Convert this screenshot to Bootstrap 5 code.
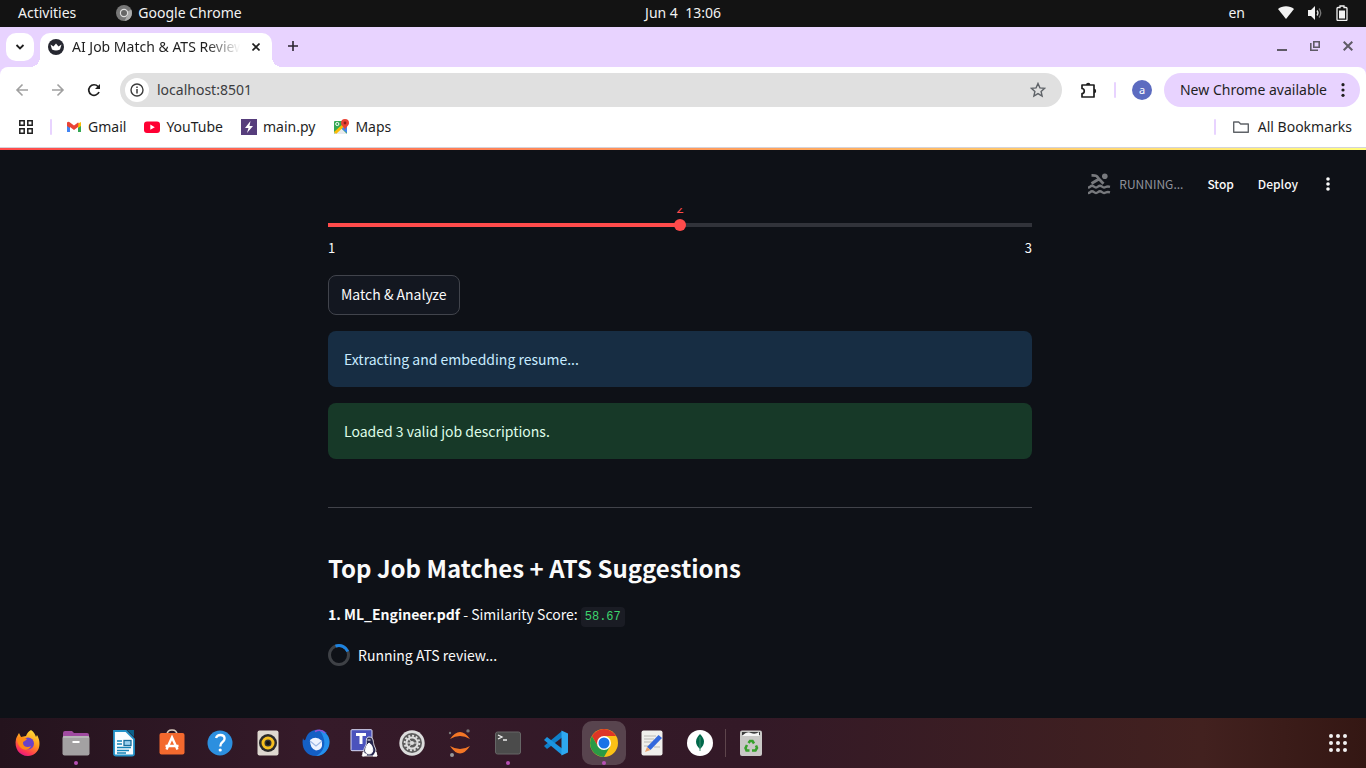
<!DOCTYPE html>
<html lang="en">
<head>
<meta charset="utf-8">
<meta name="viewport" content="width=device-width, initial-scale=1">
<title>AI Job Match &amp; ATS Review</title>
<link href="https://cdn.jsdelivr.net/npm/bootstrap@5.3.0/dist/css/bootstrap.min.css" rel="stylesheet">
<style>
  :root { --ui: "Noto Sans", "Open Sans", sans-serif; --app: "Noto Sans CJK SC", "Noto Sans", sans-serif; --lilac: #e8d3ff; }
  body { font-family: var(--ui); font-size: 14px; line-height: 20px; background: #0e1117; color: #1f1f1f; }
  button { font: inherit; color: inherit; border: 0; background: none; padding: 0; }
  svg { display: block; flex: none; }
  a { color: inherit; text-decoration: none; }

  /* desktop top bar */
  .sysbar { height: 27px; background: #131313; color: #f2f2f2; padding: 0 18px 1px; }
  .sysbar > div { flex: 1 1 0; }
  .app-menu { margin-left: 40px; gap: 6px; }
  .tray { gap: 13px; }
  .tray button { margin-right: 20px; }

  /* browser frame */
  .tabstrip { height: 40px; background: var(--lilac); padding: 6px 13px 0 6px; }
  .tab-search { width: 28px; height: 28px; border-radius: 10px; background: #fff; }
  .browser-tab { position: relative; width: 232px; height: 34px; border-radius: 10px 10px 0 0; background: #fff; padding: 0 8px 6px; margin-left: 6px; }
  .browser-tab::before, .browser-tab::after { content: ""; position: absolute; bottom: 0; width: 10px; height: 10px; }
  .browser-tab::before { right: 100%; background: radial-gradient(circle at 0 0, transparent 10px, #fff 10px); }
  .browser-tab::after { left: 100%; background: radial-gradient(circle at 100% 0, transparent 10px, #fff 10px); }
  .tab-title { width: 168px; overflow: hidden; white-space: nowrap; -webkit-mask-image: linear-gradient(90deg, #000 80%, transparent); mask-image: linear-gradient(90deg, #000 80%, transparent); }
  .window-buttons { gap: 23px; }
  .under-tabs { background: var(--lilac); }
  .toolbar { height: 46px; background: #fff; border-radius: 8px 8px 0 0; padding: 0 6px 0 14px; }
  .nav-buttons { gap: 20px; }
  .omnibox { height: 34px; border-radius: 17px; background: #e0e0e0; padding: 0 16px 0 5px; margin: 0 18px; }
  .omnibox input { border: 0; background: none; outline: 0; padding: 0; color: #3c3d40; }
  .site-info { width: 24px; height: 24px; border-radius: 50%; background: #fff; }
  .divider { width: 2px; height: 16px; background: var(--lilac); border-radius: 1px; }
  .avatar { width: 20px; height: 20px; border-radius: 50%; background: #5c6bc0; color: #fff; font-size: 11px; line-height: 20px; }
  .update-pill { height: 34px; border-radius: 17px; background: var(--lilac); padding: 0 9px 0 16px; margin-left: 12px; }
  .bookmarks { height: 35px; background: #fff; padding: 0 14px 7px 18px; border-bottom: 1px solid #d3d3dc; }
  .bookmark-items { gap: 18px; margin-left: 14px; }
  .bookmark-items a { gap: 6px; }
  .rainbow { height: 2px; background: linear-gradient(90deg, #ff4b4b, #ffa75f 58%, #fffd80); }

  /* web app */
  .app { font-family: var(--app); color: #fafafa; }
  .app-header { height: 58px; padding: 10px 32px 0 0; gap: 24px; font-size: 12px; font-weight: 500; }
  .running { color: #8f919b; font-weight: 400; }
  .app-body { padding-right: 6px; overflow: hidden; }
  .app-column { width: 100%; max-width: 704px; font-size: 14px; line-height: 24px; padding-top: 11px; }
  .slider-wrap { position: relative; }
  .slider { -webkit-appearance: none; appearance: none; display: block; width: 100%; height: 12px; margin: 0; background: linear-gradient(90deg, #ff4b4b 50%, #31333a 50%) center / 100% 4px no-repeat; }
  .slider::-webkit-slider-thumb { -webkit-appearance: none; width: 12px; height: 12px; border-radius: 50%; background: #ff4b4b; }
  .slider-value { position: absolute; left: 0; right: 0; bottom: 13px; text-align: center; color: #ff4b4b; font-size: 13px; line-height: 20px; }
  .slider-ends { font-size: 13px; line-height: 20px; padding: 7px 0 0; }
  .btn-app { height: 40px; padding: 0 12px 2px; border: 1px solid #41444c; border-radius: 8px; background: #131720; color: #fafafa; margin: 17px 0 16px; }
  .note { border: 0; border-radius: 8px; padding: 16px; margin: 0 0 16px; }
  .note-info { background: #172d43; color: #c7ebff; }
  .note-success { background: #173928; color: #dffde9; }
  .rule { margin: 48px 0 46px; border-top: 1px solid #41434a; opacity: 1; }
  .app-column h2 { font-size: 24px; line-height: 28px; font-weight: 700; margin: 0 0 20px; }
  .score { font: 12px/20px "Liberation Mono", monospace; color: #3dd56d; background: #1a1c24; border-radius: 4px; padding: 0 4px; }

  /* dock */
  .dock { height: 50px; padding: 0 4px; background: linear-gradient(90deg, #24131d, #351a29 22%, #331927 55%, #42211f 88%, #341713); }
  .dock button { position: relative; width: 48px; height: 50px; }
  .dock .current { width: 44px; height: 44px; margin: 0 2px; border-radius: 10px; background: #58444e; }
  .dock .open-app::after { content: ""; position: absolute; left: 50%; bottom: 3px; width: 4px; height: 4px; margin-left: -2px; border-radius: 50%; background: #b650b4; }
  .dock .current::after { bottom: 0; }
  .dock-line { width: 1px; height: 28px; background: #5e454c; margin: 0 1px; }
</style>
</head>
<body class="d-flex flex-column vh-100 overflow-hidden">

<header class="sysbar d-flex align-items-center">
  <div class="d-flex align-items-center">
    <button type="button">Activities</button>
    <button type="button" class="app-menu d-flex align-items-center">
      <svg width="16" height="16" viewBox="0 0 16 16"><circle cx="8" cy="8" r="8" fill="#777"/><path d="M8 8 15.300 4.800A8 8 0 0 1 8.500 16L11.500 10z" fill="#aaa"/><circle cx="8" cy="8" r="4.200" fill="#ddd"/><circle cx="8" cy="8" r="3" fill="#666"/></svg>
      Google Chrome
    </button>
  </div>
  <button type="button">Jun 4&nbsp; 13:06</button>
  <div class="tray d-flex align-items-center justify-content-end">
    <button type="button">en</button>
    <svg width="16" height="14" viewBox="0 0 16 14"><path d="M0 3C4-.6 12-.6 16 3L8 13z" fill="#f2f2f2"/></svg>
    <svg width="16" height="16" viewBox="0 0 16 16"><path d="M1 5h3l4-4v14l-4-4H1z" fill="#f2f2f2"/><path d="M10 5.500q2 2.500 0 5" fill="none" stroke="#ddd" stroke-width="1.300"/><path d="M12 3.500q3.500 4.500 0 9" fill="none" stroke="#777" stroke-width="1.300"/></svg>
    <svg width="12" height="16" viewBox="0 0 12 16"><path d="M4 1h4v1.500h2q1 0 1 1v11q0 1-1 1H2q-1 0-1-1v-11q0-1 1-1h2z" fill="none" stroke="#f2f2f2" stroke-width="1.300"/><path d="M3 5.500h6v8H3z" fill="#f2f2f2"/></svg>
  </div>
</header>

<div class="tabstrip d-flex">
  <button type="button" class="tab-search d-flex align-items-center justify-content-center" aria-label="Search tabs"><svg width="10" height="6" viewBox="0 0 10 6"><path d="m1.500 1 3.500 3.500L8.500 1" fill="none" stroke="#1f1f1f" stroke-width="1.800"/></svg></button>
  <div class="browser-tab d-flex align-items-center">
    <svg width="16" height="16" viewBox="0 0 16 16"><circle cx="8" cy="8" r="8" fill="#262730"/><path d="m2.500 5.500 3 2L8 4.500l2.500 3 3-2-1.500 5q-4 2-8 0z" fill="#fff"/></svg>
    <span class="tab-title ms-2">AI Job Match &amp; ATS Review</span>
    <button type="button" class="ms-auto me-1" aria-label="Close tab"><svg width="8" height="8" viewBox="0 0 8 8"><path d="m.5.5 7 7m0-7-7 7" stroke="#1f1f1f" stroke-width="1.600"/></svg></button>
  </div>
  <button type="button" class="ms-3 pb-1 mb-1" aria-label="New tab"><svg width="10" height="10" viewBox="0 0 10 10"><path d="M5 0v10M0 5h10" stroke="#2b2530" stroke-width="1.600"/></svg></button>
  <div class="window-buttons d-flex ms-auto mb-1 pb-1 align-items-center">
    <button type="button" aria-label="Minimize"><svg width="10" height="10" viewBox="0 0 10 10"><path d="M0 9h10" stroke="#5f5a66" stroke-width="2"/></svg></button>
    <button type="button" aria-label="Restore"><svg width="10" height="10" viewBox="0 0 10 10"><path d="M3.800.8h5.400v5.400H3.800zM.8 2v7.200H8" fill="none" stroke="#5f5a66" stroke-width="1.600"/></svg></button>
    <button type="button" aria-label="Close"><svg width="10" height="10" viewBox="0 0 10 10"><path d="m.7.7 8.600 8.600m0-8.600L.7 9.300" stroke="#5f5a66" stroke-width="2"/></svg></button>
  </div>
</div>

<div class="under-tabs">
  <div class="toolbar d-flex align-items-center">
    <div class="nav-buttons d-flex">
      <button type="button" aria-label="Back"><svg width="16" height="16" viewBox="0 0 16 16"><path d="M14 8H3m5.500-5.500L3 8l5.500 5.500" fill="none" stroke="#a0a0a0" stroke-width="1.600"/></svg></button>
      <button type="button" aria-label="Forward"><svg width="16" height="16" viewBox="0 0 16 16"><path d="M2 8h11M7.500 2.500 13 8l-5.500 5.500" fill="none" stroke="#a0a0a0" stroke-width="1.600"/></svg></button>
      <button type="button" aria-label="Reload"><svg width="16" height="16" viewBox="0 0 16 16"><path d="M13 10A5.300 5.300 0 1 1 12 4.500l1.500 1.500" fill="none" stroke="#1f1f1f" stroke-width="1.700"/><path d="M14 2v5H9z" fill="#1f1f1f"/></svg></button>
    </div>
    <div class="omnibox d-flex align-items-center flex-grow-1">
      <button type="button" class="site-info d-flex align-items-center justify-content-center" aria-label="Site information"><svg width="14" height="14" viewBox="0 0 14 14"><circle cx="7" cy="7" r="6" fill="none" stroke="#3c3c3c" stroke-width="1.400"/><path d="M7 6v4.500M7 3.500V5" stroke="#3c3c3c" stroke-width="1.500"/></svg></button>
      <input class="flex-grow-1 ms-2" type="text" value="localhost:8501" aria-label="Address">
      <button type="button" aria-label="Bookmark this page"><svg width="16" height="16" viewBox="0 0 16 16"><path d="m8 1.500 1.900 4.400 4.800.4-3.600 3.200 1 4.600L8 11.600l-4.100 2.500 1-4.600L1.300 6.300l4.800-.4z" fill="none" stroke="#5f6368" stroke-width="1.400"/></svg></button>
    </div>
    <button type="button" aria-label="Extensions"><svg width="18" height="18" viewBox="0 0 18 18"><path d="M2 4h12v12H2v-3.500c3 0 3-5 0-5z" fill="none" stroke="#1f1f1f" stroke-width="1.700" stroke-linejoin="round"/><path d="M6 4a2.200 2.200 0 0 1 4.400 0zM14 7.800a2.200 2.200 0 0 1 0 4.400z" fill="#1f1f1f"/></svg></button>
    <span class="divider mx-3"></span>
    <button type="button" class="avatar text-center">a</button>
    <button type="button" class="update-pill d-flex align-items-center gap-2">New Chrome available
      <svg width="16" height="16" viewBox="0 0 16 16"><g fill="#1f1f1f"><circle cx="8" cy="2.700" r="1.600"/><circle cx="8" cy="8" r="1.600"/><circle cx="8" cy="13.300" r="1.600"/></g></svg></button>
  </div>
</div>

<nav class="bookmarks d-flex align-items-center" aria-label="Bookmarks">
  <button type="button" aria-label="Apps"><svg width="16" height="16" viewBox="0 0 16 16"><path d="M1.800 1.800h4.400v4.400H1.800zM9.800 1.800h4.400v4.400H9.800zM1.800 9.800h4.400v4.400H1.800zM9.800 9.800h4.400v4.400H9.800z" fill="none" stroke="#1f1f1f" stroke-width="1.500"/></svg></button>
  <span class="divider ms-3 me-0"></span>
  <div class="bookmark-items d-flex">
    <a href="#" class="d-flex align-items-center"><svg width="16" height="16" viewBox="0 0 16 16"><path d="M1 4v9h3V6z" fill="#4285f4"/><path d="M15 4v9h-3V6z" fill="#34a853"/><path d="M12 4.500 15 3v4l-3 2z" fill="#fbbc04"/><path d="M1 3.500Q2.500 2 4 3.500l4 3 4-3Q13 3 12 8L8 11 4 8v1L1 7z" fill="#ea4335"/></svg>Gmail</a>
    <a href="#" class="d-flex align-items-center"><svg width="16" height="16" viewBox="0 0 16 16"><rect y="2.500" width="16" height="11.500" rx="3" fill="#ff0033"/><path d="m6.300 5.600 4.500 2.600-4.500 2.600z" fill="#fff"/></svg>YouTube</a>
    <a href="#" class="d-flex align-items-center"><svg width="16" height="16" viewBox="0 0 16 16"><path d="M0 0h16v16H0z" fill="#563d7c"/><path d="M9.500 2 4 9h3.500L6 14l6-7H8.500z" fill="#fff"/></svg>main.py</a>
    <a href="#" class="d-flex align-items-center"><svg width="16" height="16" viewBox="0 0 16 16"><rect x="1" y="2" width="13" height="13" rx="1" fill="#34a853"/><path d="m1 14 6-6 7 7H2z" fill="#e8eaed"/><path d="m8 9 6-3v8z" fill="#4285f4"/><path d="M1 13 12 3l2 2-11 10z" fill="#fbbc04"/><circle cx="4.300" cy="5" r="1.600" fill="none" stroke="#fff"/><path d="M12 0a4 4 0 0 1 4 4c0 2.500-3 3.500-4 7-1-3.500-4-4.500-4-7a4 4 0 0 1 4-4" fill="#ea4335"/><circle cx="12" cy="4" r="1.400" fill="#8c2018"/></svg>Maps</a>
  </div>
  <span class="divider ms-auto me-3"></span>
  <a href="#" class="d-flex align-items-center gap-2"><svg width="18" height="16" viewBox="0 0 18 16"><path d="M1.700 3h5l2 2h7.600v8.300H1.700z" fill="none" stroke="#5f6368" stroke-width="1.400" stroke-linejoin="round"/></svg>All Bookmarks</a>
</nav>
<div class="rainbow"></div>

<div class="app d-flex flex-column flex-grow-1 overflow-hidden">
  <header class="app-header d-flex align-items-center justify-content-end">
    <div class="running d-flex align-items-center gap-2">
      <svg width="24" height="22" viewBox="0 0 24 22" fill="none" stroke="#77797d" stroke-width="2.400"><path d="M4.500 2.300c5-.2 5.500.8 7 3.200l5 5.200M4.500 10.500l7.500-4.500" stroke-width="2.800"/><circle cx="17.800" cy="3.300" r="2.800" fill="#77797d" stroke="none"/><path d="M1 14.500c2.500 0 2-1.700 4-1.700s2 1.700 4 1.700 2-1.700 4-1.700 2 1.700 4 1.700 2-1.700 6-.7M1 20c2.500 0 2-1.700 4-1.700S7 20 9 20s2-1.700 4-1.700 2 1.700 4 1.700 2-1.700 6-.7"/></svg>
      RUNNING...
    </div>
    <button type="button">Stop</button>
    <button type="button">Deploy</button>
    <button type="button" aria-label="Menu"><svg width="12" height="16" viewBox="0 0 12 16" fill="#fafafa"><circle cx="6" cy="3" r="1.800"/><circle cx="6" cy="8" r="1.800"/><circle cx="6" cy="13" r="1.800"/></svg></button>
  </header>
  <main class="app-body flex-grow-1">
    <div class="app-column mx-auto">
      <div class="slider-wrap">
        <output class="slider-value" for="top-n">2</output>
        <input class="slider" id="top-n" type="range" min="1" max="3" value="2" aria-label="Number of matches">
      </div>
      <div class="slider-ends d-flex justify-content-between"><span>1</span><span>3</span></div>
      <button type="button" class="btn-app">Match &amp; Analyze</button>
      <div class="alert note note-info" role="alert">Extracting and embedding resume...</div>
      <div class="alert note note-success" role="alert">Loaded 3 valid job descriptions.</div>
      <hr class="rule">
      <h2>Top Job Matches + ATS Suggestions</h2>
      <p class="mb-3"><strong class="fw-bold">1. ML_Engineer.pdf</strong> - Similarity Score: <code class="score d-inline-block">58.67</code></p>
      <div class="d-flex align-items-center gap-2" role="status">
        <svg width="22" height="22" viewBox="0 0 22 22" fill="none" stroke-width="3"><circle cx="11" cy="11" r="9.500" stroke="#3e4146"/><path d="M7.500 2.200A9.500 9.500 0 0 1 19.800 7.500" stroke="#1c83e1"/></svg>
        <span>Running ATS review...</span>
      </div>
    </div>
  </main>
</div>

<footer class="dock d-flex align-items-center">
  <button type="button" aria-label="Firefox"><svg class="mx-auto" width="28" height="28" viewBox="0 0 28 28"><defs><linearGradient id="fx" x1=".8" y1="0" x2=".3" y2="1"><stop stop-color="#ffe53b"/><stop offset=".45" stop-color="#ff9a1f"/><stop offset=".8" stop-color="#ff3b4f"/><stop offset="1" stop-color="#e31587"/></linearGradient></defs><path d="M17 1c3 2 4 4 5 7l1-2c5 8 3 20-9 21C5 27 0 19 2 10c1-3 2-4 3-6l2 4 5-1c1-3 3-5 5-6" fill="url(#fx)"/><circle cx="14" cy="14.500" r="6" fill="#6a42c8"/><path d="M3 9c4-2 6-1 10 1-1 2-4 2-4 4 0 4 5 5 8 3-3 7-14 4-14-8" fill="#ff8a16"/></svg></button>
  <button type="button" class="open-app" aria-label="Files"><svg class="mx-auto" width="28" height="28" viewBox="0 0 28 28"><path d="M1 9V4q0-2 2-2h7l2 2h13q2 0 2 2v4z" fill="#a04aa0"/><rect x=".5" y="7" width="27" height="19.500" rx="2" fill="#a3a1a2"/><path d="M1 8h26" stroke="#ccc"/><rect x="10.500" y="12" width="7" height="2" fill="#fff"/></svg></button>
  <button type="button" aria-label="Writer"><svg class="mx-auto" width="28" height="28" viewBox="0 0 28 28"><path d="M4 2h12l8 8v15q0 1.500-2 1.500H6q-2 0-2-1.500z" fill="#f8fcff" stroke="#2291c8" stroke-width="1.800"/><path d="M17 1h7v7z" fill="#0b6089"/><path d="M7 12h5M7 15h5M7 18.500h14M7 21.500h12M7 24h9" stroke="#1584b8" stroke-width="1.500"/><rect x="14" y="11.500" width="7" height="5" fill="#9ad0ee" stroke="#176c99" stroke-width="1.300"/></svg></button>
  <button type="button" aria-label="Software"><svg class="mx-auto" width="28" height="28" viewBox="0 0 28 28"><path d="M9 6q0-5 5-5t5 5" fill="none" stroke="#ddd0c0" stroke-width="1.500"/><rect x="1.500" y="4" width="25" height="21.500" rx="2" fill="#f3692e"/><path d="m8.500 20.500 5.500-12 5.500 12M7.500 17h13" fill="none" stroke="#fff" stroke-width="2.400"/></svg></button>
  <button type="button" aria-label="Help"><svg class="mx-auto" width="28" height="28" viewBox="0 0 28 28"><circle cx="14" cy="14" r="12.500" fill="#2c8fdf"/><path d="M10 9q1-3 4.500-3c5 0 5 5 2 7-2 1.300-2.200 2-2.200 4.500" fill="none" stroke="#fff" stroke-width="2.300"/><circle cx="14.200" cy="21" r="1.600" fill="#fff"/></svg></button>
  <button type="button" aria-label="Rhythmbox"><svg class="mx-auto" width="28" height="28" viewBox="0 0 28 28"><rect x="3.500" y="1.500" width="21" height="25" rx="2" fill="#ded8d0"/><circle cx="14" cy="14" r="9" fill="#2a2a2b"/><circle cx="14" cy="14" r="5" fill="#333" stroke="#f5bf20" stroke-width="3"/><circle cx="14" cy="14" r="2" fill="#141414"/></svg></button>
  <button type="button" aria-label="Thunderbird"><svg class="mx-auto" width="28" height="28" viewBox="0 0 28 28"><path d="M1 9c1 3 2 3 3 0C7-1 20-1 25 4l-2 1c7 7 4 22-9 22C4 27-1 19 1 9" fill="#145fc4"/><path d="M18 2c8 1 11 8 9 15-2 6-7 10-13 10 8-4 12-14 4-25" fill="#2490ec"/><path d="M8 11q6-5 12 1v5q-1 4-6 4.500Q8 20 8 11" fill="#eef3ff"/><path d="m8 12 6 5 6-5" fill="none" stroke="#9fb9e5" stroke-width="1.200"/><path d="M13 2.500q6-3 10 1.500" stroke="#9355d6" stroke-width="1.500" fill="none"/></svg></button>
  <button type="button" aria-label="Teams"><svg class="mx-auto" width="30" height="28" viewBox="0 0 30 28"><rect x="2" y=".7" width="21" height="21" rx="1" fill="#4b53bc" stroke="#d9daf5"/><path d="M7 5.500h10M12 5.500V15" stroke="#fff" stroke-width="3"/><path d="M20 8c5 0 4 5 5 8s3 5 1 8l2 3H13l2-4c-1-2 1-5 2-7s-1-8 3-8" fill="#26264e" stroke="#fff" stroke-width=".8"/><path d="M20 14c4 2 6 11 0 11s-3-9 0-11m-6 9 4 3-4 1zm13 0-3 4h4zM18.500 11h3" fill="#fff" stroke="#fff"/></svg></button>
  <button type="button" aria-label="Settings"><svg class="mx-auto" width="28" height="28" viewBox="0 0 28 28"><circle cx="14" cy="14" r="12.700" fill="#ddd"/><circle cx="14" cy="14" r="10" fill="#5c5c5c"/><circle cx="14" cy="14" r="7.300" fill="none" stroke="#ddd" stroke-width="2" stroke-dasharray="2 1.800"/><circle cx="14" cy="14" r="5.600" fill="none" stroke="#ddd" stroke-width="2"/><circle cx="14" cy="14" r="2" fill="#ddd"/><path d="M9 14h10M14 14l-3-4M14 14l-3 4" stroke="#ddd"/></svg></button>
  <button type="button" aria-label="Jupyter"><svg class="mx-auto" width="28" height="28" viewBox="0 0 28 28"><path d="M4 10Q14-4 24 10 14 4 4 10M4 17q10 15 20 0-10 6-20 0" fill="#f37726"/><circle cx="22" cy="1.900" r="1.700" fill="#777"/><circle cx="4" cy="4" r="1.200" fill="#777"/><circle cx="6" cy="26" r="2" fill="#999"/></svg></button>
  <button type="button" class="open-app" aria-label="Terminal"><svg class="mx-auto" width="28" height="28" viewBox="0 0 28 28"><rect x="1.500" y="3" width="25" height="22" rx="2" fill="#4b4b4b" stroke="#666"/><path d="m4 6 4 2-4 2M9 11h4" fill="none" stroke="#eee" stroke-width="1.300"/></svg></button>
  <button type="button" aria-label="Visual Studio Code"><svg class="mx-auto" width="28" height="28" viewBox="0 0 28 28"><path d="M20 2 2 17l3 3 17-13z" fill="#0f7fc9"/><path d="m20 26-18-15 3-3 17 13z" fill="#1b94e0"/><path d="m19.500 1.500 6.500 3v19l-6.500 3z" fill="#2ea8f0"/></svg></button>
  <button type="button" class="current open-app" aria-label="Google Chrome"><svg class="mx-auto" width="28" height="28" viewBox="0 0 28 28"><circle cx="14" cy="14" r="14" fill="#fbc116"/><path d="M1.900 7A14 14 0 0 1 26.100 7H14L8 17.500z" fill="#de3526"/><path d="M1.900 7A14 14 0 0 0 14 28l6-10.500H8z" fill="#2b9a45"/><circle cx="14" cy="14" r="7" fill="#fff"/><circle cx="14" cy="14" r="5.500" fill="#1a73e8"/></svg></button>
  <button type="button" aria-label="Text Editor"><svg class="mx-auto" width="28" height="28" viewBox="0 0 28 28"><rect x="3.500" y="1.500" width="21" height="25" rx="2" fill="#f0efec"/><path d="M6 7h12M6 10h10M6 13h8M6 17h6M16 18h6" stroke="#b9b8b4"/><path d="M20.500 6 24 9 12.500 21 9 18z" fill="#3368dd"/><path d="m9 18 3.500 3-5.500 2z" fill="#e9a26e"/></svg></button>
  <button type="button" aria-label="MongoDB Compass"><svg class="mx-auto" width="28" height="28" viewBox="0 0 28 28"><circle cx="14" cy="14" r="13" fill="#fff"/><path d="M14 5q8 8 0 15-8-7 0-15" fill="#00684a"/><path d="M14 8v14" stroke="#3f8f71"/></svg></button>
  <span class="dock-line"></span>
  <button type="button" aria-label="Trash"><svg class="mx-auto" width="28" height="28" viewBox="0 0 28 28"><rect x="3" y="1.500" width="22" height="25.500" rx="2" fill="#c9c8c6"/><path d="M5 3h18v3H5z" fill="#3b3b3b"/><path d="M6 6q4-4 8-2t8-1v4H6z" fill="#f4f4f4"/><g fill="none" stroke="#37a02c" stroke-width="2.500"><path d="m11.500 14 1.500-2h2.500l1.500 2.500M19 16.500l1 2.500-1.500 2.500H15M12.500 21.500h-3L8.500 19l1.500-3"/></g></svg></button>
  <button type="button" class="ms-auto" aria-label="Show applications"><svg class="mx-auto" width="18" height="18" viewBox="0 0 18 18" fill="#f2f2f2"><circle cx="2" cy="2" r="2"/><circle cx="9" cy="2" r="2"/><circle cx="16" cy="2" r="2"/><circle cx="2" cy="9" r="2"/><circle cx="9" cy="9" r="2"/><circle cx="16" cy="9" r="2"/><circle cx="2" cy="16" r="2"/><circle cx="9" cy="16" r="2"/><circle cx="16" cy="16" r="2"/></svg></button>
</footer>
<script src="https://cdn.jsdelivr.net/npm/bootstrap@5.3.0/dist/js/bootstrap.bundle.min.js"></script>
</body>
</html>
